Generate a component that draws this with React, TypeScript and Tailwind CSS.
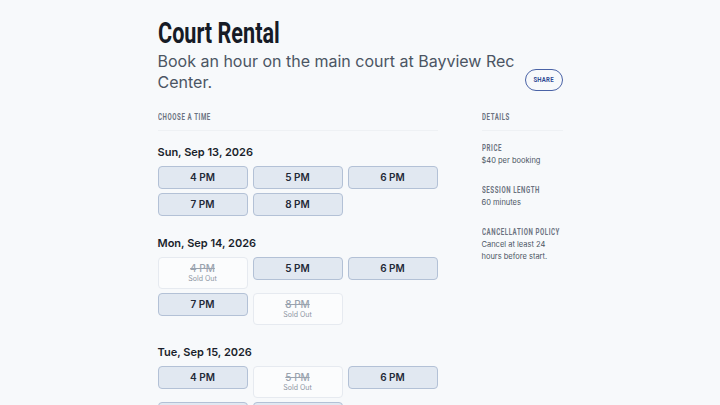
import React from 'react'

type Slot = { time: string; soldOut?: boolean }

type Day = { label: string; slots: Slot[] }

const days: Day[] = [
  {
    label: 'Sun, Sep 13, 2026',
    slots: [{ time: '4 PM' }, { time: '5 PM' }, { time: '6 PM' }, { time: '7 PM' }, { time: '8 PM' }],
  },
  {
    label: 'Mon, Sep 14, 2026',
    slots: [
      { time: '4 PM', soldOut: true },
      { time: '5 PM' },
      { time: '6 PM' },
      { time: '7 PM' },
      { time: '8 PM', soldOut: true },
    ],
  },
  {
    label: 'Tue, Sep 15, 2026',
    slots: [
      { time: '4 PM' },
      { time: '5 PM', soldOut: true },
      { time: '6 PM' },
      { time: '7 PM' },
      { time: '8 PM' },
    ],
  },
]

const details = [
  { label: 'Price', value: '$40 per booking' },
  { label: 'Session length', value: '60 minutes' },
  { label: 'Cancellation policy', value: 'Cancel at least 24 hours before start.' },
]

// no condensed face installed, so squeeze Roboto horizontally
function Label({ children }: { children: React.ReactNode }) {
  return (
    <span className="block w-max origin-left scale-x-[0.72] whitespace-nowrap font-['Roboto',sans-serif] text-[8.5px] font-bold uppercase leading-[10px] tracking-[0.8px] text-[#6b7280]">
      {children}
    </span>
  )
}

function SlotButton({ slot }: { slot: Slot }) {
  if (slot.soldOut) {
    return (
      <button
        disabled
        className="flex h-[32px] flex-col items-center justify-center rounded-[4px] border border-[#e6eaf0] bg-[#fbfcfd]"
      >
        <span className="text-[10px] font-medium leading-[12px] text-[#9aa3af] line-through">{slot.time}</span>
        <span className="text-[7px] leading-[10px] text-[#8b94a1]">Sold Out</span>
      </button>
    )
  }
  return (
    <button className="h-[23px] rounded-[4px] border border-[#b3c1d6] bg-[#e1e8f1] text-[10px] font-semibold text-[#1f2937]">
      {slot.time}
    </button>
  )
}

export default function App() {
  return (
    <div className="min-h-screen bg-[#f7f9fb] font-['Inter',sans-serif] text-[#111827]">
      <div className="mx-auto w-[405px] pt-[16px]">
        {/* HEADER */}
        <div className="flex items-end gap-[8px]">
          <div className="min-w-0 flex-1">
            <h1 className="block w-max origin-left scale-x-[0.72] whitespace-nowrap font-['Roboto',sans-serif] text-[30px] font-bold leading-[34px] text-[#161b26]">
              Court Rental
            </h1>
            <p className="mt-[1px] text-[16px] leading-[21px] text-[#4b5563]">
              Book an hour on the main court at Bayview Rec Center.
            </p>
          </div>
          <button className="mb-[2px] flex h-[22px] w-[38px] shrink-0 items-center justify-center rounded-full border border-[#4a63a6]">
            <span className="inline-block scale-x-[0.75] font-['Roboto',sans-serif] text-[8px] font-bold leading-[10px] tracking-[0.3px] text-[#2e4a94]">
              SHARE
            </span>
          </button>
        </div>

        <div className="mt-[19px] grid grid-cols-[280px_81px] gap-[44px]">
          {/* TIMES */}
          <div>
            <div className="border-b border-[#eef1f4] pb-[8px]">
              <Label>Choose a time</Label>
            </div>
            <div className="flex flex-col gap-[19px] pt-[13px]">
              {days.map(day => (
                <section key={day.label}>
                  <h2 className="text-[11px] font-semibold leading-[16px] text-[#1a1f2b]">{day.label}</h2>
                  <div className="mt-[6px] grid grid-cols-3 items-start gap-x-[5px] gap-y-[4px]">
                    {day.slots.map(slot => (
                      <SlotButton key={slot.time} slot={slot} />
                    ))}
                  </div>
                </section>
              ))}
            </div>
          </div>

          {/* DETAILS */}
          <aside className="min-w-0">
            <div className="border-b border-[#eef1f4] pb-[8px]">
              <Label>Details</Label>
            </div>
            <div className="flex flex-col gap-[18px] pt-[12px]">
              {details.map(d => (
                <div key={d.label}>
                  <Label>{d.label}</Label>
                  <p className="mt-[2px] text-[7.5px] leading-[12px] text-[#4b5563]">{d.value}</p>
                </div>
              ))}
            </div>
          </aside>
        </div>
      </div>
    </div>
  )
}
